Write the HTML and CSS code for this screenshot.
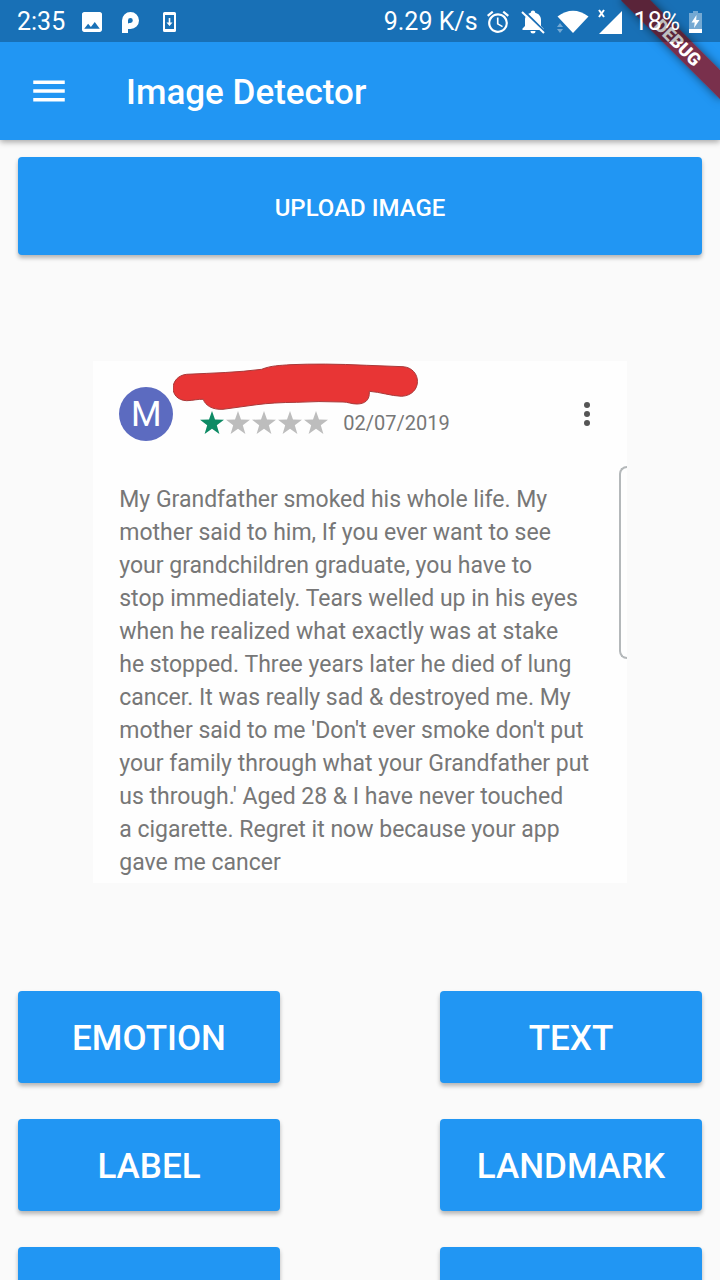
FILE: index.html
```html
<!DOCTYPE html>
<html lang="en">
<head>
<meta charset="utf-8">
<meta name="viewport" content="width=device-width, initial-scale=1">
<title>Image Detector</title>
<link rel="stylesheet" href="styles.css">
</head>
<body>
<div class="app">
  <header class="top">
    <div class="status">
      <div class="status-group status-left">
        <span>2:35</span>
        <svg width="20" height="20" viewBox="3 3 18 18" fill="currentColor"><path d="M21 19V5c0-1.100-.9-2-2-2H5c-1.100 0-2 .9-2 2v14c0 1.100.9 2 2 2h14c1.100 0 2-.9 2-2zM8.500 13.500l2.500 3.010L14.500 12l4.500 6H5l3.500-4.500z"/></svg>
        <svg class="icon-p" width="17" height="21" viewBox="0 0 17 21"><path fill="currentColor" fill-rule="evenodd" d="M0 21V8.500a8.500 8.500 0 1 1 8.500 8.500H6v4zM6 11.500V8.500a2.400 2.400 0 1 1 2.400 2.400H7.500z"/></svg>
        <svg class="icon-phone" width="13" height="20" viewBox="0 0 13 20"><path fill="currentColor" fill-rule="evenodd" d="M1.500 0h10A1.500 1.500 0 0 1 13 1.500v17a1.500 1.500 0 0 1-1.500 1.500h-10A1.500 1.500 0 0 1 0 18.500v-17A1.500 1.500 0 0 1 1.500 0zM2 3v14h9V3zM5.700 6h1.600v4.500h2.200l-3 3.500-3-3.500h2.200z"/></svg>
      </div>
      <div class="status-group status-right">
        <span>9.29 K/s</span>
        <svg width="22" height="22" viewBox="2 2 20 20" fill="currentColor"><path d="M22 5.720l-4.600-3.860-1.290 1.530 4.600 3.860L22 5.720zM7.880 3.390L6.600 1.860 2 5.710l1.290 1.530 4.590-3.850zM12.500 8H11v6l4.750 2.850.75-1.230-4-2.370V8zM12 4c-4.970 0-9 4.030-9 9s4.020 9 9 9a9 9 0 0 0 0-18zm0 16c-3.870 0-7-3.130-7-7s3.130-7 7-7 7 3.130 7 7-3.130 7-7 7z"/></svg>
        <svg class="icon-bell" width="24" height="24" viewBox="0 0 24 24"><path fill="currentColor" d="M1.500 20v-1.500L4 16V10C4 6 6.500 3.500 9.800 2.700 9.800-.3 14.200-.3 14.200 2.700 17.500 3.500 20 6 20 10v6l2.500 2.500V20zM9.500 21h5a2.500 2.500 0 0 1-5 0z"/><path class="slash-gap" d="M3 1l21 21"/><path d="M1 2l22 21" stroke="currentColor" stroke-width="2"/></svg>
        <svg class="icon-wifi" width="32" height="24" viewBox="0 0 32 24"><path fill="currentColor" d="M0.500 6.500Q16-5 31.500 6.500L16 23z"/><path class="faint" d="M0 17l3-4 3 4zM0 19l3 4 3-4z"/></svg>
        <svg width="24" height="24" viewBox="0 0 24 24" overflow="visible"><path fill="currentColor" d="M24 1v23H1z"/><path d="M1 0l5 7M6 0L1 7" stroke="currentColor" stroke-width="2"/></svg>
        <span class="battery-level">18%</span>
        <svg width="13" height="24" viewBox="0 0 13 24"><path class="faint" d="M4 1h5v2h4v16H0V3h4z"/><path fill="currentColor" d="M0 19h13v4H0zM7.500 5L2.500 12.500h3.200L5 18l5.500-8H7.200z"/></svg>
      </div>
    </div>
    <div class="debug"><span class="debug-band">DEBUG</span></div>
    <div class="bar">
      <button class="menu" type="button" aria-label="Open navigation menu">
        <svg width="42" height="42" viewBox="0 0 24 24" fill="currentColor"><path d="M3 18h18v-2H3v2zm0-5h18v-2H3v2zm0-7v2h18V6H3z"/></svg>
      </button>
      <h1 class="title">Image Detector</h1>
    </div>
  </header>
  <main class="content">
    <button class="btn upload" type="button">UPLOAD IMAGE</button>
    <article class="review">
      <div class="review-head">
        <span class="avatar">M</span>
        <div class="author">
          <svg class="scribble" width="245" height="48" viewBox="0 0 245 48"><path d="M13.700 11.300C40 10 65 9.500 88.700 6.300C98 2.500 107 2.500 117 1.700Q150 .2 193.700 2.300L230 3.700C249 5 250 32 228.700 33.300C218 33 207 29 196.300 28.300C197 37 192 41 184 41C178 41 175 39 170 39Q145 38 123.700 39.300Q100 39.500 83.700 41.700L50 46.300C39 47 32 42 30.300 36.300C25 36 20 37.500 13.700 37.700C-5 37-4 13 13.700 11.300z"/></svg>
          <div class="rating">
            <svg class="stars" width="132" height="24" viewBox="0 0 130 24" role="img" aria-label="1 out of 5 stars">
              <defs><path id="star" d="M13 0l3 8.500 9 .2-7.200 5.500 2.600 8.800L13 17.800 5.600 23l2.600-8.800L1 8.700l9-.2z"/></defs>
              <use class="star-on" href="#star"/><use href="#star" x="26"/><use href="#star" x="52"/><use href="#star" x="78"/><use href="#star" x="104"/>
            </svg>
            <time datetime="2019-07-02">02/07/2019</time>
          </div>
        </div>
        <svg class="dots" width="8" height="24" viewBox="0 0 8 24" fill="currentColor"><circle cx="4" cy="3" r="3"/><circle cx="4" cy="12" r="3"/><circle cx="4" cy="21" r="3"/></svg>
      </div>
      <p class="review-text">My Grandfather smoked his whole life. My<br>mother said to him, If you ever want to see<br>your grandchildren graduate, you have to<br>stop immediately. Tears welled up in his eyes<br>when he realized what exactly was at stake<br>he stopped. Three years later he died of lung<br>cancer. It was really sad &amp; destroyed me. My<br>mother said to me 'Don't ever smoke don't put<br>your family through what your Grandfather put<br>us through.' Aged 28 &amp; I have never touched<br>a cigarette. Regret it now because your app<br>gave me cancer</p>
      <span class="edge"></span>
    </article>
    <div class="actions">
      <button class="btn" type="button">EMOTION</button>
      <button class="btn" type="button">TEXT</button>
      <button class="btn" type="button">LABEL</button>
      <button class="btn" type="button">LANDMARK</button>
      <button class="btn" type="button" aria-label="More"></button>
      <button class="btn" type="button" aria-label="More"></button>
    </div>
  </main>
</div>
</body>
</html>
```
FILE: styles.css
```css
* { box-sizing: border-box; }
body { margin: 0; background: #fafafa; font-family: Roboto, sans-serif; }
svg { display: block; flex: none; }
.app { height: 100vh; display: flex; flex-direction: column; overflow: hidden; }

.top { position: relative; z-index: 1; flex: none; background: #2196f3; color: #fff; box-shadow: 0 2px 6px rgba(0, 0, 0, .35); }
.status { position: relative; z-index: 2; height: 42px; padding: 2px 18px 0 17px; display: flex; align-items: center; justify-content: space-between; background: rgba(0, 0, 0, .25); font-size: 25px; line-height: 40px; }
.status-group { display: flex; align-items: center; }
.status-left { gap: 17px; }
.status-right { gap: 9px; }
.icon-p { margin-left: 3px; }
.icon-phone { margin-left: 7px; }
.icon-bell { margin-left: 3px; }
.icon-wifi { margin-left: 3px; }
.battery-level { margin-left: 3px; }
.faint { fill: #fff; opacity: .4; }
.slash-gap { stroke: #196eb6; stroke-width: 2; }

.debug { position: absolute; z-index: 1; top: 0; right: 0; width: 110px; height: 110px; overflow: hidden; pointer-events: none; }
.debug-band { position: absolute; top: 32px; right: -28px; width: 140px; height: 21px; transform: rotate(45deg); background: rgba(150, 16, 24, .76); box-shadow: 0 0 10px rgba(0, 0, 0, .5); font-size: 18px; line-height: 21px; font-weight: 900; text-align: center; }

.bar { height: 98px; padding: 0 28px; display: flex; align-items: center; gap: 56px; }
.menu { padding: 0; border: 0; background: none; color: inherit; }
.title { margin: 0; padding-top: 4px; font-size: 35px; line-height: 42px; font-weight: 500; }

.content { flex: 1; min-height: 0; overflow: hidden; padding: 17px 18px; display: flex; flex-direction: column; }
.btn { padding: 3px 6px 0; border: 0; border-radius: 4px; background: #2196f3; color: #fff; font-family: inherit; font-size: 35px; font-weight: 500; height: 92px; box-shadow: 0 3px 4px rgba(0, 0, 0, .28); }
.upload { flex: none; height: 98px; font-size: 24px; }

.review { position: relative; flex: none; align-self: center; width: 78%; margin: 106px 0 108px; padding: 2px 26px 4px; background: #fefefe; color: #777; }
.review-head { display: flex; align-items: flex-start; }
.avatar { width: 54px; height: 54px; margin-top: 24px; border-radius: 50%; background: #5c6bc0; color: #fff; font-size: 35px; line-height: 56px; text-align: center; }
.author { flex: 1; }
.scribble { fill: #e83535; stroke: #a83a3a; stroke-width: 1; }
.rating { display: flex; align-items: center; gap: 13px; padding-left: 25px; font-size: 20px; line-height: 24px; }
.stars { fill: #bdbdbd; }
.star-on { fill: #0d8a64; }
.dots { margin: 39px 10px 0 0; color: #555; }
.review-text { margin: 42px 0 0; font-size: 23px; line-height: 33px; white-space: nowrap; }
.edge { position: absolute; right: 0; top: 105px; width: 8px; height: 193px; border: 2px solid #b4b8ba; border-right: 0; border-radius: 8px 0 0 8px; }

.actions { flex: none; display: grid; grid-template-columns: 1fr 1fr; gap: 36px 160px; }
```
